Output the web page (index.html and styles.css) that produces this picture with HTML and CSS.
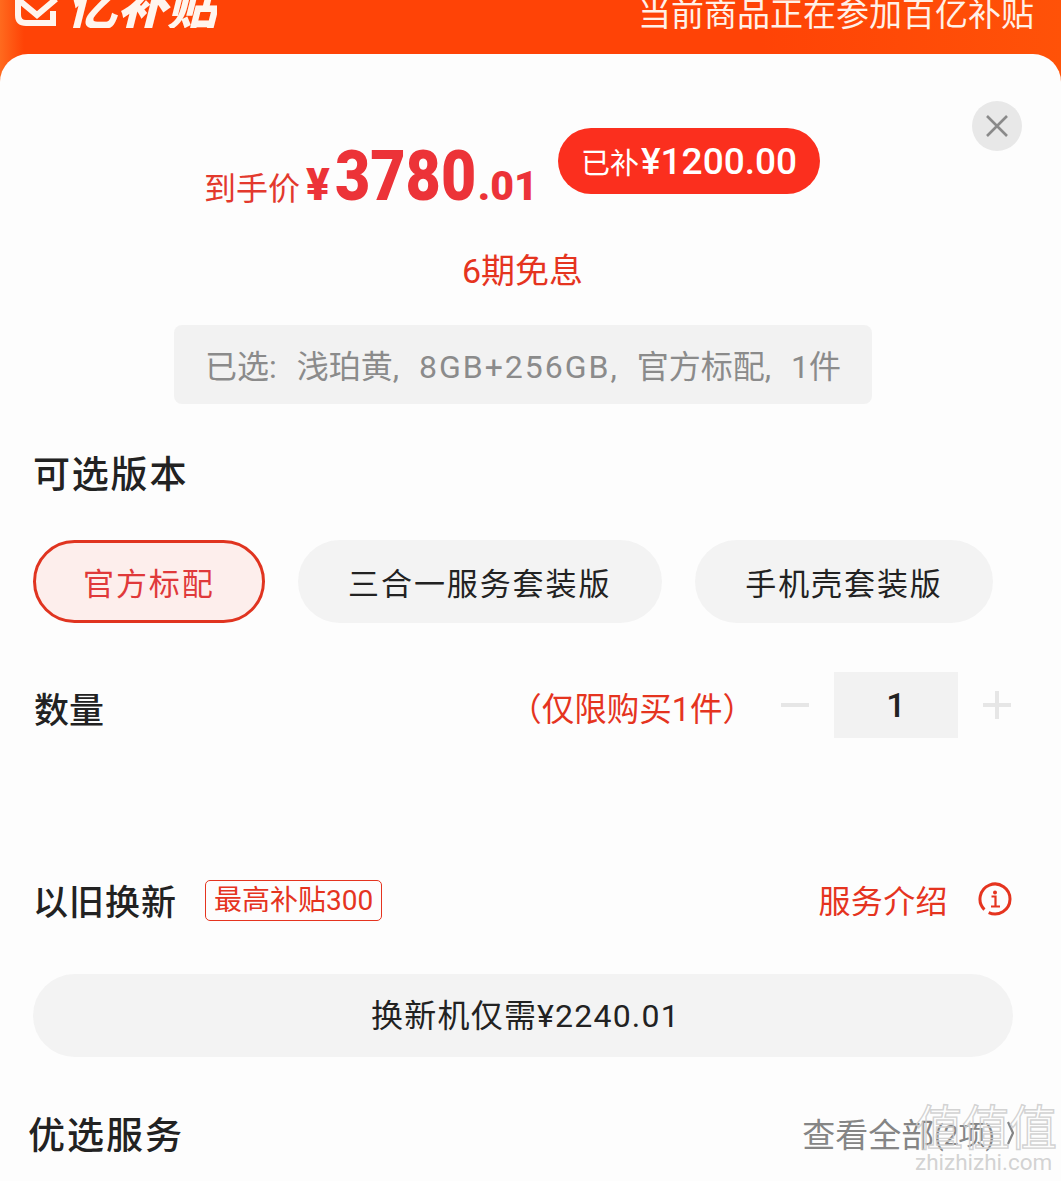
FILE: index.html
```html
<!DOCTYPE html>
<html lang="zh">
<head>
<meta charset="utf-8">
<title>百亿补贴</title>
<link rel="stylesheet" href="styles.css">
</head>
<body>
<div class="page">
  <header class="banner">
    <div class="logo">
      <svg class="logo-icon" width="44" height="30" viewBox="0 0 44 30"><path d="M4 0V17Q4 25 12 25H39V13" fill="none" stroke="#fff5ee" stroke-width="6"/><path d="M6 3L23 17L42 1" fill="none" stroke="#fff5ee" stroke-width="6"/></svg>
      <span class="logo-text">亿补贴</span>
    </div>
    <div class="banner-note">当前商品正在参加百亿补贴</div>
  </header>
  <main class="sheet">
    <div class="close"><svg width="24" height="24" viewBox="0 0 24 24"><path d="M2 2L22 22M22 2L2 22" stroke="#8a8a8a" stroke-width="2.6" fill="none"/></svg></div>
    <section class="price-row">
      <div class="price">
        <span class="price-label">到手价</span><span class="price-yen">¥</span><span class="price-int">3780</span><span class="price-dec">.01</span>
      </div>
      <div class="subsidy"><span class="subsidy-label">已补</span>¥1200.00</div>
    </section>
    <div class="instalment">6期免息</div>
    <div class="selected">已选: 浅珀黄, <span class="spec">8GB+256GB</span>, 官方标配, 1件</div>
    <h2 class="title title-version">可选版本</h2>
    <div class="options">
      <div class="chip chip-on">官方标配</div>
      <div class="chip">三合一服务套装版</div>
      <div class="chip">手机壳套装版</div>
    </div>
    <div class="qty-row">
      <div class="qty-title">数量</div>
      <div class="qty-limit">（仅限购买1件）</div>
      <div class="stepper">
        <svg class="step" width="28" height="28" viewBox="0 0 28 28"><path d="M0 14H28" stroke="#e6e6e6" stroke-width="4"/></svg>
        <div class="qty-value">1</div>
        <svg class="step" width="28" height="28" viewBox="0 0 28 28"><path d="M0 14H28M14 0V28" stroke="#e6e6e6" stroke-width="4"/></svg>
      </div>
    </div>
    <div class="trade-row">
      <div class="trade-title">以旧换新</div>
      <div class="tag">最高补贴300</div>
      <div class="service">服务介绍</div>
      <svg class="info" width="34" height="34" viewBox="0 0 34 34"><path d="M6.4 27.6A15 15 0 1 1 10.7 30.6" fill="none" stroke="#e5341f" stroke-width="3"/><circle cx="17" cy="10.5" r="2" fill="#e5341f"/><path d="M13.5 14.5H17.5V24M13 24.5H22" fill="none" stroke="#e5341f" stroke-width="2.2"/></svg>
    </div>
    <div class="trade-bar">换新机仅需¥2240.01</div>
    <div class="pref-row">
      <h2 class="title pref-title">优选服务</h2>
      <div class="pref-all"><span>查看全部</span><span class="pref-count">(2项)</span><svg class="chev" width="7" height="26" viewBox="0 0 7 26"><path d="M1 2L6 13L1 24" fill="none" stroke="#858585" stroke-width="2.2"/></svg></div>
    </div>
  </main>
  <div class="watermark">
    <div class="wm-chars">值值值</div>
    <div class="wm-url">zhizhizhi.com</div>
  </div>
</div>
</body>
</html>
```
FILE: styles.css
```css
* { box-sizing: border-box; margin: 0; padding: 0; }
html, body { width: 1061px; height: 1181px; overflow: hidden; background: #fdfdfd; }
body { font-family: Roboto, "Noto Sans CJK SC", sans-serif; color: #222; }
.page { position: relative; width: 1061px; height: 1181px; overflow: hidden; background: linear-gradient(90deg, #ff6a1e 0, #ff4306 24px, #ff4306 760px, #ff5208 100%); }
.banner { height: 54px; display: flex; justify-content: space-between; align-items: flex-start; padding: 0 27px 0 14px; overflow: hidden; }
.logo { display: flex; align-items: flex-end; height: 28px; gap: 9px; }
.logo-icon { flex: none; }
.logo-text { font-family: "Noto Sans CJK SC", sans-serif; font-size: 50px; line-height: 50px; font-weight: 900; font-style: italic; color: #fff5ee; height: 28px; overflow: hidden; display: flex; align-items: flex-end; }
.banner-note { font-family: "Noto Sans CJK SC", sans-serif; font-size: 33px; line-height: 25px; color: #fff1e8; height: 30px; overflow: hidden; }
.sheet { position: relative; height: 1127px; background: #fdfdfd; border-radius: 28px 28px 0 0; overflow: hidden; }
.close { position: absolute; left: 972px; top: 47px; width: 50px; height: 50px; border-radius: 50%; background: #e8e8e8; display: flex; align-items: center; justify-content: center; }
.price-row { display: flex; align-items: flex-start; padding: 74px 0 0 204px; height: 170px; }
.price { display: flex; align-items: baseline; height: 80px; color: #ec3338; width: 354px; padding-top: 2px; }
.price-label { font-family: "Noto Sans CJK SC", sans-serif; font-size: 32px; line-height: 113px; color: #e3392d; }
.price-yen { font-size: 44px; font-weight: 900; margin-left: 6px; }
.price-int { display: inline-block; width: 143px; font-size: 70px; font-weight: 900; transform: scaleX(.87); transform-origin: left; white-space: nowrap; margin-left: 5px; }
.price-dec { font-size: 41px; font-weight: 900; }
.subsidy { width: 262px; height: 66px; border-radius: 33px; background: #fb2f1e; color: #fff; display: flex; align-items: center; justify-content: center; font-size: 37px; font-weight: 500; }
.subsidy-label { font-family: "Noto Sans CJK SC", sans-serif; font-size: 29px; font-weight: 400; margin-right: 2px; }
.instalment { width: 1045px; text-align: center; font-size: 34px; line-height: 44px; color: #e5341f; margin-top: 25px; height: 44px; }
.selected { margin: 32px 0 0 174px; width: 698px; height: 79px; border-radius: 8px; background: #f2f2f2; color: #8b8b8b; font-size: 32px; line-height: 84px; text-align: center; white-space: nowrap; word-spacing: 12px; }
.spec { letter-spacing: 2px; }
.title { font-family: "Noto Sans CJK SC", sans-serif; font-weight: 500; font-size: 37px; letter-spacing: 1.8px; color: #222; }
.title-version { line-height: 50px; margin: 43px 0 0 33px; }
.options { display: flex; gap: 33px; margin: 43px 0 0 33px; }
.chip { height: 83px; border-radius: 42px; background: #f3f3f3; padding: 0 50.5px; font-family: "Noto Sans CJK SC", sans-serif; font-size: 31px; letter-spacing: 1.9px; line-height: 83px; color: #222; white-space: nowrap; }
.chip-on { border: 3px solid #e03420; background: #fdeeec; color: #e0393a; line-height: 77px; padding: 0 47px; }
.qty-row { display: flex; align-items: center; margin: 49px 0 0 34px; height: 66px; padding-right: 50px; }
.qty-title { font-family: "Noto Sans CJK SC", sans-serif; font-weight: 500; font-size: 35px; line-height: 66px; padding-top: 5px; }
.qty-limit { margin-left: auto; margin-right: 26px; font-size: 32.5px; color: #e5341f; white-space: nowrap; padding-top: 2px; }
.stepper { display: flex; align-items: center; gap: 25px; }
.qty-value { width: 124px; height: 66px; background: #f2f2f2; text-align: center; line-height: 66px; font-size: 34px; font-weight: 500; color: #222; }
.trade-row { display: flex; align-items: center; margin: 136px 0 0 33px; height: 50px; padding-right: 49px; }
.trade-title { font-family: "Noto Sans CJK SC", sans-serif; font-weight: 500; font-size: 35px; letter-spacing: 1px; }
.tag { margin: 2px 0 0 28px; height: 41px; width: 177px; border: 1px solid #e5341f; border-radius: 5px; font-size: 28px; line-height: 39px; color: #e5341f; text-align: center; white-space: nowrap; }
.service { margin-left: auto; font-size: 32px; color: #e5341f; letter-spacing: .4px; font-family: "Noto Sans CJK SC", sans-serif; }
.info { margin-left: 30px; }
.trade-bar { margin: 50px 0 0 33px; padding-left: 5px; width: 980px; height: 83px; border-radius: 42px; background: #f3f3f3; text-align: center; line-height: 85px; font-size: 32px; color: #222; letter-spacing: 1.2px; }
.pref-row { display: flex; justify-content: space-between; align-items: center; margin: 51px 0 0 28px; height: 50px; padding-right: 47px; }
.pref-title { font-size: 37px; letter-spacing: 2px; }
.pref-all { display: flex; align-items: center; font-size: 33px; color: #858585; white-space: nowrap; }
.pref-count { font-size: 27px; margin-right: 12px; }
.chev { flex: none; }
.watermark { position: absolute; left: 915px; top: 1098px; width: 140px; color: transparent; pointer-events: none; }
.wm-chars { font-family: "Noto Sans CJK SC", sans-serif; font-size: 48px; line-height: 52px; letter-spacing: -1px; -webkit-text-stroke: 1.4px rgba(205,205,205,.9); white-space: nowrap; }
.wm-url { font-size: 22.5px; line-height: 24px; color: rgba(205,205,205,.9); white-space: nowrap; }
```
